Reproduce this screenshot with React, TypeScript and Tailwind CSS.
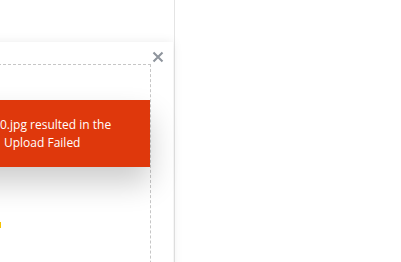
import React from "react";

export default function App() {
  return (
    <div className="relative w-[401px] h-[262px] overflow-hidden bg-white flex font-['Open_Sans',sans-serif]">
      {/* left pane with the upload dialog */}
      <div className="relative w-[175px] h-full border-r border-[#e4e4e4] shrink-0">
        <div className="absolute top-[42px] right-[1px] w-[300px] h-[260px] bg-white shadow-[0_0_10px_rgba(0,0,0,0.08)] pt-[22px] pl-[20px] pr-[22px]">
          <button className="absolute top-[9px] right-[9px] w-[12px] h-[12px]">
            <svg width="12" height="12" viewBox="0 0 12 12" fill="none">
              <path d="M1.5 1.5L10.5 10.5M10.5 1.5L1.5 10.5" stroke="#8f959d" strokeWidth="2.1" />
            </svg>
          </button>

          {/* drop zone */}
          <div className="h-[240px] border border-dashed border-[#c6c6c6] pt-[35px]">
            <div className="bg-[#df380c] text-white text-[12px] leading-[18px] pl-[106px] pt-[16px] pb-[15px] shadow-[0_16px_30px_rgba(0,0,0,0.2)]">
              <div>0.jpg resulted in the</div>
              <div className="pl-[4px]">Upload Failed</div>
            </div>
            <div className="mt-[55px] w-[8px] h-[6px] ml-[101px]">
              <svg width="8" height="6" viewBox="0 0 8 6">
                <path d="M0 0H6V6H0Z" fill="#f6c200" />
              </svg>
            </div>
          </div>
        </div>
      </div>
      <div className="flex-1 h-full bg-white" />
    </div>
  );
}
